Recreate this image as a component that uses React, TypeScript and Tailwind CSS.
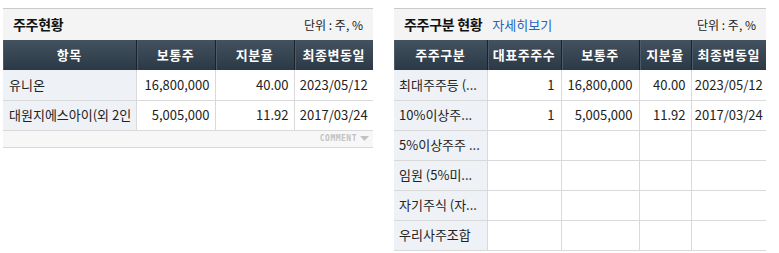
import React from 'react';

const font = { fontFamily: '"Noto Sans CJK KR", "Noto Sans", sans-serif' };

type Row = string[];

const leftRows: Row[] = [
  ['유니온', '16,800,000', '40.00', '2023/05/12'],
  ['대원지에스아이(외 2인', '5,005,000', '11.92', '2017/03/24'],
];

const rightRows: Row[] = [
  ['최대주주등 (...', '1', '16,800,000', '40.00', '2023/05/12'],
  ['10%이상주...', '1', '5,005,000', '11.92', '2017/03/24'],
  ['5%이상주주 ...', '', '', '', ''],
  ['임원 (5%미...', '', '', '', ''],
  ['자기주식 (자...', '', '', '', ''],
  ['우리사주조합', '', '', '', ''],
];

function PanelTitle({ title, link }: { title: string; link?: string }) {
  return (
    <div className="flex items-center justify-between h-[32px] bg-[#f4f4f4] border-t border-[#c9c9c9] pl-[10px] pr-[10px]">
      <div className="flex items-center gap-[10px]">
        <span className="text-[14px] font-bold text-[#111] tracking-[-0.3px]">{title}</span>
        {link && <span className="text-[13px] text-[#1f64c0]">{link}</span>}
      </div>
      <span className="text-[12px] text-[#222]">단위 : 주, %</span>
    </div>
  );
}

function HeadCell({ label, first }: { label: string; first?: boolean }) {
  return (
    <th
      className={`h-[30px] p-0 text-[13px] font-bold text-white text-center tracking-[0.5px] bg-gradient-to-b from-[#43525f] to-[#2b3947] shadow-[inset_1px_0_0_#4c5b69] ${first ? '' : 'border-l border-[#1a232d]'}`}
    >
      {label}
    </th>
  );
}

export default function App() {
  return (
    <div className="w-[779px] h-[253px] bg-white flex gap-[21px] pl-[3px] pt-[8px]" style={font}>
      {/* 주주현황 */}
      <div className="w-[370px] shrink-0">
        <PanelTitle title="주주현황" />
        <table className="w-full table-fixed border-collapse">
          <colgroup>
            <col className="w-[133px]" />
            <col className="w-[79px]" />
            <col className="w-[79px]" />
            <col />
          </colgroup>
          <thead>
            <tr>
              <HeadCell label="항목" first />
              <HeadCell label="보통주" />
              <HeadCell label="지분율" />
              <HeadCell label="최종변동일" />
            </tr>
          </thead>
          <tbody>
            {leftRows.map((r) => (
              <tr key={r[0]} className="h-[30px] border-b border-[#d9d9d9] text-[13px] text-[#222]">
                <td className="bg-[#eef1f6] pl-[6px] whitespace-nowrap overflow-hidden">{r[0]}</td>
                <td className="border-l border-[#d9d9d9] text-right pr-[5px]">{r[1]}</td>
                <td className="border-l border-[#d9d9d9] text-right pr-[5px]">{r[2]}</td>
                <td className="border-l border-[#d9d9d9] text-center">{r[3]}</td>
              </tr>
            ))}
          </tbody>
        </table>
        <div className="h-[17px] bg-[#f7f7f7] border-b border-[#d9d9d9] flex items-center justify-end pr-[4px] gap-[3px]">
          <span className="text-[8px] leading-none tracking-[0.5px] text-[#c2c2c2] font-bold" style={{ fontFamily: '"DejaVu Sans Mono", monospace' }}>
            COMMENT
          </span>
          <svg width="9" height="5" viewBox="0 0 9 5">
            <path d="M0 0H9L4.5 5Z" fill="#c2c2c2" />
          </svg>
        </div>
      </div>

      {/* 주주구분 현황 */}
      <div className="w-[372px] shrink-0">
        <PanelTitle title="주주구분 현황" link="자세히보기" />
        <table className="w-full table-fixed border-collapse">
          <colgroup>
            <col className="w-[93px]" />
            <col className="w-[74px]" />
            <col className="w-[78px]" />
            <col className="w-[52px]" />
            <col />
          </colgroup>
          <thead>
            <tr>
              <HeadCell label="주주구분" first />
              <HeadCell label="대표주주수" />
              <HeadCell label="보통주" />
              <HeadCell label="지분율" />
              <HeadCell label="최종변동일" />
            </tr>
          </thead>
          <tbody>
            {rightRows.map((r) => (
              <tr key={r[0]} className="h-[30px] border-b border-[#d9d9d9] text-[13px] text-[#222]">
                <td className="bg-[#eef1f6] pl-[5px] whitespace-nowrap overflow-hidden">{r[0]}</td>
                <td className="border-l border-[#d9d9d9] text-right pr-[6px]">{r[1]}</td>
                <td className="border-l border-[#d9d9d9] text-right pr-[6px]">{r[2]}</td>
                <td className="border-l border-[#d9d9d9] text-right pr-[5px]">{r[3]}</td>
                <td className="border-l border-[#d9d9d9] text-center">{r[4]}</td>
              </tr>
            ))}
          </tbody>
        </table>
      </div>
    </div>
  );
}
